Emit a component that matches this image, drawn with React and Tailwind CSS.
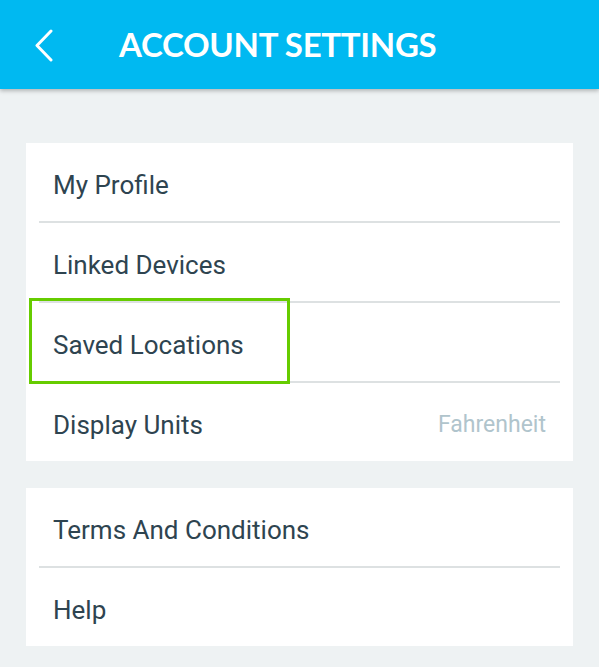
import React from "react";

const Row = ({ label, value }) => (
  <div className="h-[78px] px-[27px] pt-[6px] flex items-center justify-between">
    <span className="text-[26px] text-[#2e4450]">{label}</span>
    {value && <span className="text-[23px] text-[#b0c4cc]">{value}</span>}
  </div>
);

const Divider = () => <div className="mx-[13px] h-[2px] bg-[#dde1e2]" />;

export default function App() {
  return (
    <div
      className="w-[599px] h-[667px] bg-[#eef2f3] overflow-hidden"
      style={{ fontFamily: "Roboto, 'Liberation Sans', sans-serif" }}
    >
      <div className="h-[89px] bg-[#00b9f1] flex items-center shadow-[0_2px_4px_rgba(0,0,0,0.25)] relative z-10">
        <svg className="ml-[34px] w-[20px] h-[34px]" viewBox="0 0 20 34" fill="none">
          <path d="M17 3 L3 17.5 L17 32" stroke="white" strokeWidth="3" strokeLinecap="round" strokeLinejoin="round" />
        </svg>
        <h1
          className="ml-[65px] text-white text-[33px] font-bold tracking-[-0.3px]"
          style={{ fontFamily: "Lato, 'Liberation Sans', sans-serif" }}
        >
          ACCOUNT SETTINGS
        </h1>
      </div>

      <div className="px-[26px] pt-[54px] flex flex-col gap-[27px]">
        <div className="bg-white relative">
          <Row label="My Profile" />
          <Divider />
          <Row label="Linked Devices" />
          <Divider />
          <Row label="Saved Locations" />
          <Divider />
          <Row label="Display Units" value="Fahrenheit" />
          <div className="absolute left-[3px] top-[155px] w-[261px] h-[86px] border-[3px] border-[#66cc00]" />
        </div>

        <div className="bg-white">
          <Row label="Terms And Conditions" />
          <Divider />
          <Row label="Help" />
        </div>
      </div>
    </div>
  );
}
